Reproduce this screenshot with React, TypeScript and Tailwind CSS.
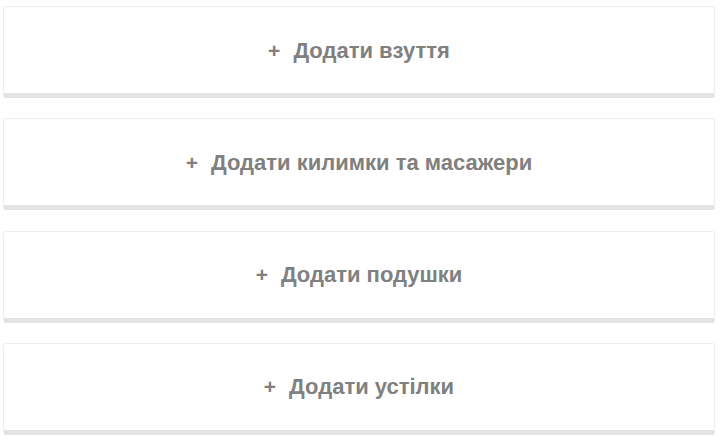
const items = ["Додати взуття", "Додати килимки та масажери", "Додати подушки", "Додати устілки"];

export default function App() {
  return (
    <div className="w-[723px] h-[443px] bg-white pt-[6px] pl-[3px] pr-[8px] flex flex-col gap-[20.3px]" style={{ fontFamily: "'Liberation Sans', Arial, sans-serif" }}>
      {items.map((label) => (
        <button
          key={label}
          className="h-[92px] w-full flex items-center justify-center gap-[13px] bg-white rounded-[3px] border border-[#ececec] border-b-[5px] border-b-[#e3e3e3] text-[#808080] text-[22px] font-bold"
        >
          <span className="font-bold text-[21px] leading-none">+</span>
          <span>{label}</span>
        </button>
      ))}
    </div>
  );
}
